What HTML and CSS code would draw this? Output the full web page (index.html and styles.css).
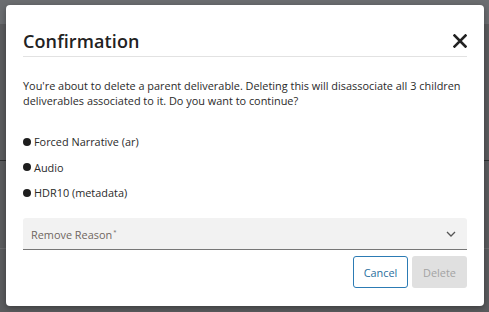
FILE: index.html
```html
<!DOCTYPE html>
<html>
<head>
<meta charset="utf-8">
<link rel="stylesheet" href="styles.css">
</head>
<body>
<div class="backdrop">
  <div class="bg-top"></div>
  <div class="bg-line l1"></div>
  <div class="bg-line l2"></div>
</div>
<div class="modal">
  <div class="header">
    <h1 class="title">Confirmation</h1>
    <button class="close" aria-label="Close">
      <svg width="14" height="14" viewBox="0 0 14 14"><path d="M1.5 1.5 L12.5 12.5 M12.5 1.5 L1.5 12.5" stroke="#222" stroke-width="2.6" stroke-linecap="square"/></svg>
    </button>
  </div>
  <p class="message">You're about to delete a parent deliverable. Deleting this will disassociate all 3 children deliverables associated to it. Do you want to continue?</p>
  <ul class="list">
    <li><span class="dot"></span>Forced Narrative (ar)</li>
    <li><span class="dot"></span>Audio</li>
    <li><span class="dot"></span>HDR10 (metadata)</li>
  </ul>
  <div class="select">
    <span class="label">Remove Reason<sup>*</sup></span>
    <svg class="chev" width="10" height="6" viewBox="0 0 10 6"><path d="M1 1 L5 5 L9 1" fill="none" stroke="#555" stroke-width="1.3"/></svg>
  </div>
  <div class="actions">
    <button class="btn cancel">Cancel</button>
    <button class="btn delete" disabled>Delete</button>
  </div>
</div>
</body>
</html>
```

FILE: styles.css
```css
html, body {
  margin: 0;
  padding: 0;
  width: 489px;
  height: 312px;
  overflow: hidden;
  font-family: "Open Sans", "Liberation Sans", sans-serif;
}
body {
  background: #5b5c5e;
  position: relative;
}
.backdrop {
  position: absolute;
  inset: 0;
}
.bg-top {
  height: 24px;
  background: #6b6d70;
}
.bg-line {
  position: absolute;
  left: 0;
  right: 0;
  height: 1px;
}
.l1 { top: 160px; background: #2e2f30; }
.l2 { top: 248px; background: #6a6b6d; }

.modal {
  position: absolute;
  left: 6px;
  top: 5px;
  width: 444px;
  height: 301px;
  padding: 0 17px;
  background: #fff;
  border-radius: 4px;
  box-shadow: 0 2px 6px rgba(0,0,0,0.35);
}
.header {
  display: flex;
  align-items: center;
  justify-content: space-between;
  height: 51px;
  border-bottom: 1px solid #e2e2e2;
}
.title {
  margin: 0;
  padding-top: 20px;
  font-size: 18px;
  font-weight: 600;
  color: #222;
  letter-spacing: 0.1px;
}
.close {
  border: 0;
  background: none;
  padding: 0;
  margin-top: 20px;
  width: 14px;
  height: 14px;
  display: flex;
}
.message {
  margin: 21px 0 0;
  font-size: 10.9px;
  line-height: 15px;
  color: #2a2a2a;
}
.list {
  list-style: none;
  margin: 26px 0 0;
  padding: 0;
  display: flex;
  flex-direction: column;
  gap: 10.5px;
}
.list li {
  display: flex;
  align-items: center;
  font-size: 10.9px;
  line-height: 15px;
  color: #2a2a2a;
}
.dot {
  width: 8px;
  height: 8px;
  border-radius: 50%;
  background: #1e1e1e;
  margin-right: 3px;
}
.select {
  margin-top: 18px;
  height: 30px;
  background: #f2f2f2;
  border-bottom: 1px solid #777;
  border-radius: 3px 3px 0 0;
  display: flex;
  align-items: center;
  justify-content: space-between;
  padding: 1px 11px 0 8px;
}
.label {
  font-size: 10.9px;
  color: #6f6660;
}
.label sup {
  font-size: 6px;
  vertical-align: 5px;
  margin-left: 1px;
}
.actions {
  display: flex;
  justify-content: flex-end;
  gap: 4px;
  margin-top: 6px;
}
.btn {
  height: 32px;
  width: 55px;
  border-radius: 3px;
  font-family: inherit;
  font-size: 10.9px;
  padding: 0;
}
.cancel {
  background: #fff;
  border: 1px solid #2c7bb4;
  color: #2a6f9e;
}
.delete {
  background: #e0e0e0;
  border: 0;
  color: #a3a3a3;
}
```
